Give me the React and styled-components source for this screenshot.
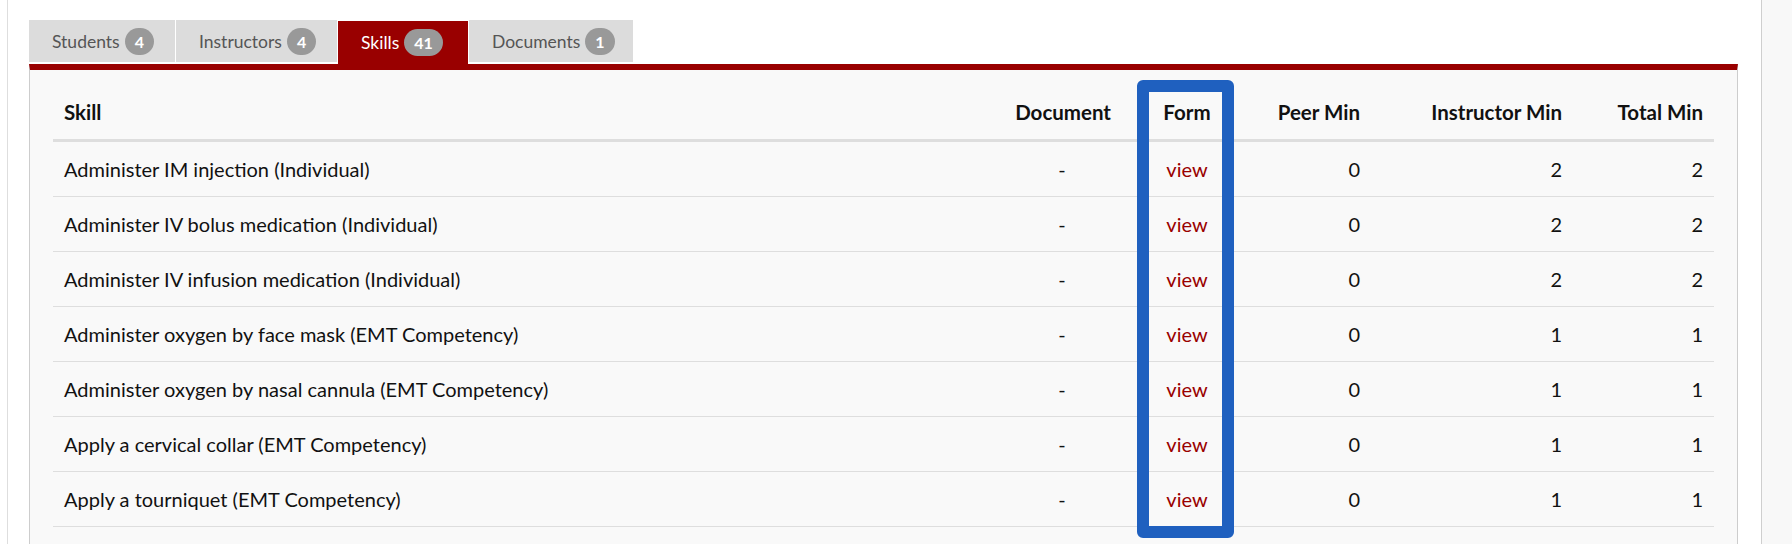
import React from "react";
import styled, { createGlobalStyle } from "styled-components";

const GlobalStyle = createGlobalStyle`
    body {
        margin: 0;
        background: #fff;
        font-family: "Lato", "Liberation Sans", sans-serif;
        color: #111;
    }
`;

const Frame = styled.div`
    display: flex;
    min-height: 544px;
`;

const Gutter = styled.div`
    width: 7px;
    flex-shrink: 0;
    border-right: 1px solid #dedede;
`;

const Main = styled.main`
    flex: 1;
    padding: 20px 23px 0 21px;
    min-width: 0;
`;

const Scroller = styled.div`
    width: 30px;
    flex-shrink: 0;
    border-left: 1px solid #cfcfcf;
    background: #f8f8f8;
`;

const Tabs = styled.nav`
    display: flex;
    gap: 1px;
    align-items: flex-start;
`;

const Tab = styled.div`
    display: flex;
    align-items: center;
    gap: 5px;
    box-sizing: border-box;
    width: ${(props) => props.width}px;
    height: ${(props) => (props.active ? 43 : 42)}px;
    margin-top: ${(props) => (props.active ? 1 : 0)}px;
    margin-bottom: ${(props) => (props.active ? 0 : 1)}px;
    padding-left: 23px;
    background: ${(props) => (props.active ? "#990000" : "#dcdcdc")};
    color: ${(props) => (props.active ? "#fff" : "#555")};
    font-size: 17.5px;
`;

const Badge = styled.span`
    display: inline-flex;
    align-items: center;
    justify-content: center;
    min-width: 27px;
    height: 27px;
    padding: 0 10px;
    box-sizing: border-box;
    border-radius: 14px;
    background: #999;
    color: #fff;
    font-size: 16px;
    font-weight: 700;
`;

const Panel = styled.section`
    position: relative;
    border: 1px solid #cdcdcd;
    border-top: 6px solid #990000;
    background: #f9f9f9;
    padding: 15px 23px 40px;
`;

const Row = styled.div`
    display: grid;
    grid-template-columns: 1fr 120px 130px 119px 202px 141px;
    align-items: center;
    height: 54px;
    border-bottom: ${(props) => (props.head ? "3px solid #dedede" : "1px solid #dedede")};
    font-size: ${(props) => (props.head ? 20.5 : 20)}px;
    font-weight: ${(props) => (props.head ? 700 : 400)};
`;

const Cell = styled.div`
    padding: 0 11px;
    text-align: ${(props) => props.align || "left"};
    white-space: nowrap;
`;

const ViewLink = styled.a`
    color: #990000;
    text-decoration: none;
`;

// outline drawn around the Form column
const Highlight = styled.div`
    position: absolute;
    left: 1107px;
    top: 10px;
    width: 97px;
    height: 458px;
    box-sizing: border-box;
    border: 12px solid #1f60bf;
    border-radius: 6px;
    pointer-events: none;
`;

const tabs = [
    { label: "Students", count: 4, width: 146 },
    { label: "Instructors", count: 4, width: 161 },
    { label: "Skills", count: 41, width: 130, active: true },
    { label: "Documents", count: 1, width: 164 },
];

const skills = [
    { name: "Administer IM injection (Individual)", peer: 0, instructor: 2, total: 2 },
    { name: "Administer IV bolus medication (Individual)", peer: 0, instructor: 2, total: 2 },
    { name: "Administer IV infusion medication (Individual)", peer: 0, instructor: 2, total: 2 },
    { name: "Administer oxygen by face mask (EMT Competency)", peer: 0, instructor: 1, total: 1 },
    { name: "Administer oxygen by nasal cannula (EMT Competency)", peer: 0, instructor: 1, total: 1 },
    { name: "Apply a cervical collar (EMT Competency)", peer: 0, instructor: 1, total: 1 },
    { name: "Apply a tourniquet (EMT Competency)", peer: 0, instructor: 1, total: 1 },
];

export default function App() {
    return (
        <>
            <GlobalStyle />
            <Frame>
                <Gutter />
                <Main>
                    <Tabs>
                        {tabs.map((tab) => (
                            <Tab key={tab.label} width={tab.width} active={tab.active}>
                                {tab.label}
                                <Badge>{tab.count}</Badge>
                            </Tab>
                        ))}
                    </Tabs>
                    <Panel>
                        <Row head>
                            <Cell>Skill</Cell>
                            <Cell align="right">Document</Cell>
                            <Cell align="center">Form</Cell>
                            <Cell align="right">Peer Min</Cell>
                            <Cell align="right">Instructor Min</Cell>
                            <Cell align="right">Total Min</Cell>
                        </Row>
                        {skills.map((skill) => (
                            <Row key={skill.name}>
                                <Cell>{skill.name}</Cell>
                                <Cell align="center">-</Cell>
                                <Cell align="center">
                                    <ViewLink href="#">view</ViewLink>
                                </Cell>
                                <Cell align="right">{skill.peer}</Cell>
                                <Cell align="right">{skill.instructor}</Cell>
                                <Cell align="right">{skill.total}</Cell>
                            </Row>
                        ))}
                        <Highlight />
                    </Panel>
                </Main>
                <Scroller />
            </Frame>
        </>
    );
}
